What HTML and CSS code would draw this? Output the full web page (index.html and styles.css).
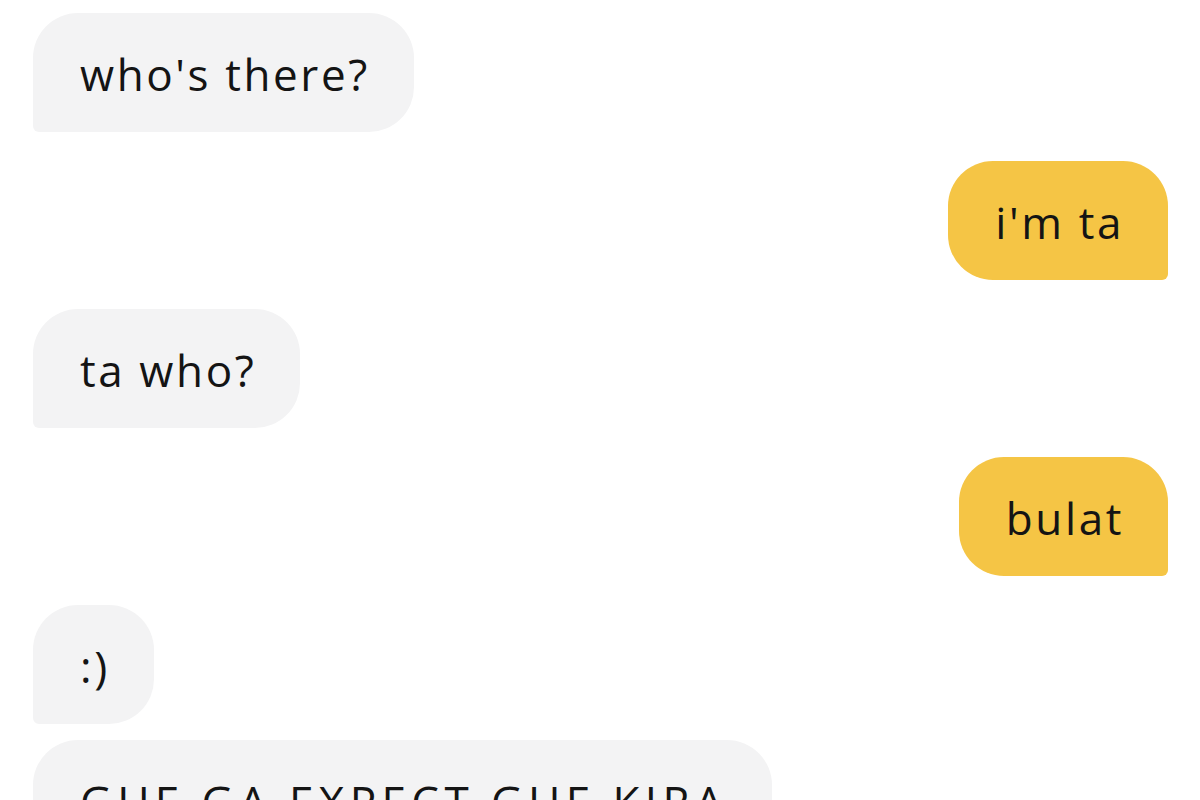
FILE: index.html
```html
<!DOCTYPE html>
<html lang="id">
<head>
    <meta charset="UTF-8">
    <meta name="viewport" content="width=device-width, initial-scale=1.0">
    <title>Chat</title>
    <link rel="stylesheet" href="styles.css">
</head>
<body>
    <div class="thread">
        <div class="group received">
            <div class="bubble">who's there?</div>
        </div>
        <div class="group sent">
            <div class="bubble">i'm ta</div>
        </div>
        <div class="group received">
            <div class="bubble">ta who?</div>
        </div>
        <div class="group sent">
            <div class="bubble">bulat</div>
        </div>
        <div class="group received">
            <div class="bubble">:)</div>
            <div class="bubble caps">GUE GA EXPECT GUE KIRA</div>
        </div>
    </div>
</body>
</html>
```

FILE: styles.css
```css
body {
    margin: 0;
    background: #ffffff;
    font-family: "Open Sans", "Liberation Sans", Arial, sans-serif;
    color: #141414;
    overflow: hidden;
}
.thread {
    display: flex;
    flex-direction: column;
    gap: 29px;
    padding: 13px 32px 0 33px;
}
.group {
    display: flex;
    flex-direction: column;
    gap: 16px;
}
.received {
    align-items: flex-start;
}
.sent {
    align-items: flex-end;
}
.bubble {
    font-size: 44px;
    font-weight: 500;
    letter-spacing: 2.6px;
    line-height: 115px;
    padding: 4px 44px 0 47px;
    white-space: nowrap;
}
.caps {
    letter-spacing: 5.4px;
}
.received .bubble {
    background: #f3f3f4;
    border-radius: 45px 45px 45px 6px;
}
.sent .bubble {
    background: #f5c545;
    border-radius: 45px 45px 6px 45px;
}
```
